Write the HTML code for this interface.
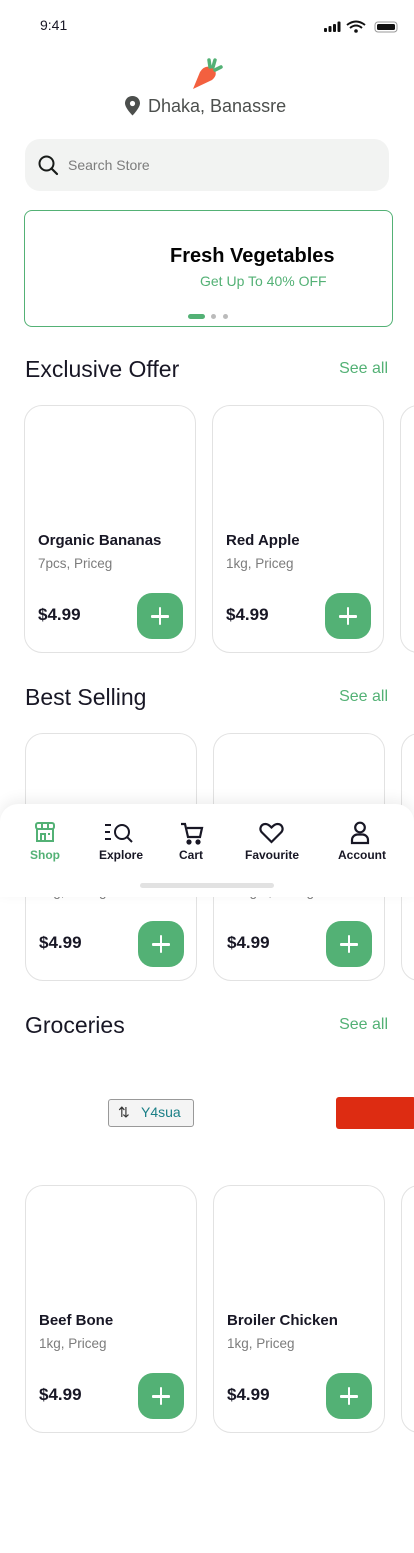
<!DOCTYPE html>
<html><head><meta charset="utf-8"><style>
*{margin:0;padding:0;box-sizing:border-box}
body{width:414px;height:1553px;background:#fff;font-family:"Liberation Sans",sans-serif;position:relative;overflow:hidden;color:#181725}
.a{position:absolute}
.card{position:absolute;width:172px;height:248px;border:1px solid #e2e2e2;border-radius:18px;background:#fff}
.card .n{position:absolute;left:13px;top:126px;font-size:15px;font-weight:bold;color:#181725}
.card .s{position:absolute;left:13px;top:150px;font-size:13.5px;color:#7c7c7c}
.card .p{position:absolute;left:13px;top:199px;font-size:17px;font-weight:bold}
.card .b{position:absolute;left:112px;top:187px;width:46px;height:46px;border-radius:15px;background:#53b175}
.card .b:before{content:"";position:absolute;left:14px;top:22px;width:18px;height:2.5px;background:#fff;border-radius:1px}
.card .b:after{content:"";position:absolute;left:21.7px;top:14px;width:2.5px;height:18px;background:#fff;border-radius:1px}
.h{position:absolute;left:25px;font-size:23px;color:#181725}
.sa{position:absolute;right:26px;font-size:16px;color:#53b175}
.nav{position:absolute;left:0;top:804px;width:414px;height:93px;background:#fff;border-radius:18px 18px 0 0;box-shadow:0 -4px 14px rgba(0,0,0,.07)}
.ni{position:absolute;top:44px;font-size:12px;font-weight:bold;color:#181725;text-align:center}
</style></head><body>
<div class="a" style="left:40px;top:17px;font-size:14px">9:41</div>
<svg class="a" style="left:323px;top:20px" width="76" height="14" viewBox="0 0 76 14">
<rect x="1" y="8" width="3" height="4" rx="1" fill="#111"/><rect x="5.5" y="6" width="3" height="6" rx="1" fill="#111"/><rect x="10" y="4" width="3" height="8" rx="1" fill="#111"/><rect x="14.5" y="1.5" width="3" height="10.5" rx="1" fill="#111"/>
<path d="M24 5 Q33 -2 42 5" stroke="#111" stroke-width="2" fill="none"/><path d="M27 8 Q33 3 39 8" stroke="#111" stroke-width="2" fill="none"/><circle cx="33" cy="11" r="1.8" fill="#111"/>
<rect x="52" y="2" width="22" height="10" rx="3" fill="none" stroke="#999"/><rect x="54" y="4" width="18" height="6" rx="1.5" fill="#111"/>
</svg>
<svg class="a" style="left:190px;top:56px" width="36" height="36" viewBox="0 0 36 36">
<path d="M3 33 L10 16 Q15 8 23 12 Q29 18 22 24 Z" fill="#f3603f"/>
<path d="M20 11 L19 4 M23 11 L25 4 M25 14 L31 11" stroke="#53b175" stroke-width="3.5" stroke-linecap="round"/>
</svg>
<svg class="a" style="left:124px;top:96px" width="17" height="20" viewBox="0 0 17 20"><path d="M8.5 0C4 0 1 3.3 1 7.3 1 12 8.5 19.5 8.5 19.5S16 12 16 7.3C16 3.3 13 0 8.5 0Z" fill="#4c4f4d"/><circle cx="8.5" cy="7.5" r="2.6" fill="#fff"/></svg>
<div class="a" style="left:148px;top:96px;font-size:18px;color:#4c4f4d">Dhaka, Banassre</div>
<div class="a" style="left:25px;top:139px;width:364px;height:52px;background:#f2f3f2;border-radius:15px"></div>
<svg class="a" style="left:38px;top:155px" width="21" height="21" viewBox="0 0 21 21"><circle cx="8.5" cy="8.5" r="7" stroke="#181b19" stroke-width="2" fill="none"/><path d="M13.5 13.5L19 19" stroke="#181b19" stroke-width="2.2" stroke-linecap="round"/></svg>
<div class="a" style="left:68px;top:157px;font-size:14px;color:#7c7c7c">Search Store</div>
<div class="a" style="left:24px;top:210px;width:369px;height:117px;border:1.5px solid #53b175;border-radius:8px"></div>
<div class="a" style="left:170px;top:245px;font-size:20px;font-weight:bold;color:#030303">Fresh Vegetables</div>
<div class="a" style="left:200px;top:273px;font-size:14px;color:#53b175">Get Up To 40% OFF</div>
<div class="a" style="left:188px;top:314px;width:17px;height:5px;border-radius:3px;background:#53b175"></div>
<div class="a" style="left:211px;top:314px;width:5px;height:5px;border-radius:3px;background:#bbb"></div>
<div class="a" style="left:223px;top:314px;width:5px;height:5px;border-radius:3px;background:#bbb"></div>

<div class="h" style="top:356px">Exclusive Offer</div><div class="sa" style="top:360px">See all</div>
<div class="card" style="left:24px;top:405px"><div class="n">Organic Bananas</div><div class="s">7pcs, Priceg</div><div class="p">$4.99</div><div class="b"></div></div>
<div class="card" style="left:212px;top:405px"><div class="n">Red Apple</div><div class="s">1kg, Priceg</div><div class="p">$4.99</div><div class="b"></div></div>
<div class="card" style="left:400px;top:405px"></div>

<div class="h" style="top:684px">Best Selling</div><div class="sa" style="top:688px">See all</div>
<div class="card" style="left:25px;top:733px"><div class="n">Bell Pepper Red</div><div class="s">1kg, Priceg</div><div class="p">$4.99</div><div class="b"></div></div>
<div class="card" style="left:213px;top:733px"><div class="n">Ginger</div><div class="s">250gm, Priceg</div><div class="p">$4.99</div><div class="b"></div></div>
<div class="card" style="left:401px;top:733px"></div>

<div class="nav">
<svg class="a" style="left:34px;top:17px" width="22" height="22" viewBox="0 0 22 22" fill="none" stroke="#53b175" stroke-width="2"><rect x="2" y="2" width="18" height="6" rx="2"/><path d="M8 2v6M14 2v6M3 8v12h16V8M7 20v-7h4v7M14 13h2"/></svg>
<div class="ni" style="left:30px;color:#53b175">Shop</div>
<svg class="a" style="left:104px;top:18px" width="30" height="22" viewBox="0 0 30 22" fill="none" stroke="#181725" stroke-width="2"><path d="M1 3h6M1 10h5M1 17h6"/><circle cx="18" cy="10" r="7"/><path d="M23 15l5 5"/></svg>
<div class="ni" style="left:99px">Explore</div>
<svg class="a" style="left:180px;top:18px" width="24" height="24" viewBox="0 0 24 24" fill="none" stroke="#181725" stroke-width="2.2"><path d="M1 2h4l3 13h12l2-9H7"/><circle cx="9" cy="20" r="1.5" fill="#181725"/><circle cx="18" cy="20" r="1.5" fill="#181725"/></svg>
<div class="ni" style="left:179px">Cart</div>
<svg class="a" style="left:259px;top:18px" width="25" height="22" viewBox="0 0 25 22" fill="none" stroke="#181725" stroke-width="2.2"><path d="M12.5 20L3 10.5C0 7.5 1.5 2 6.5 2c3 0 4.5 2 6 3.5C14 4 15.5 2 18.5 2c5 0 6.5 5.5 3.5 8.5Z"/></svg>
<div class="ni" style="left:245px">Favourite</div>
<svg class="a" style="left:350px;top:17px" width="20" height="24" viewBox="0 0 20 24" fill="none" stroke="#181725" stroke-width="2.2"><circle cx="10" cy="6.5" r="4.8"/><path d="M2 22v-3c0-3 2.5-5.5 5.5-5.5h5c3 0 5.5 2.5 5.5 5.5v3Z"/></svg>
<div class="ni" style="left:338px">Account</div>
<div class="a" style="left:140px;top:79px;width:134px;height:5px;border-radius:3px;background:#e2e2e2"></div>
</div>

<div class="h" style="top:1012px">Groceries</div><div class="sa" style="top:1016px">See all</div>
<div class="a" style="left:108px;top:1099px;width:86px;height:28px;border:1px solid #999;border-radius:3px;background:#f4f4f4"></div>
<div class="a" style="left:118px;top:1104px;font-size:14px;color:#333">⇅</div>
<div class="a" style="left:141px;top:1104px;font-size:14px;color:#1a7f86">Y4sua</div>
<div class="a" style="left:336px;top:1097px;width:80px;height:32px;border-radius:3px;background:#dd2c12"></div>

<div class="card" style="left:25px;top:1185px"><div class="n">Beef Bone</div><div class="s">1kg, Priceg</div><div class="p">$4.99</div><div class="b"></div></div>
<div class="card" style="left:213px;top:1185px"><div class="n">Broiler Chicken</div><div class="s">1kg, Priceg</div><div class="p">$4.99</div><div class="b"></div></div>
<div class="card" style="left:401px;top:1185px"></div>
</body></html>
